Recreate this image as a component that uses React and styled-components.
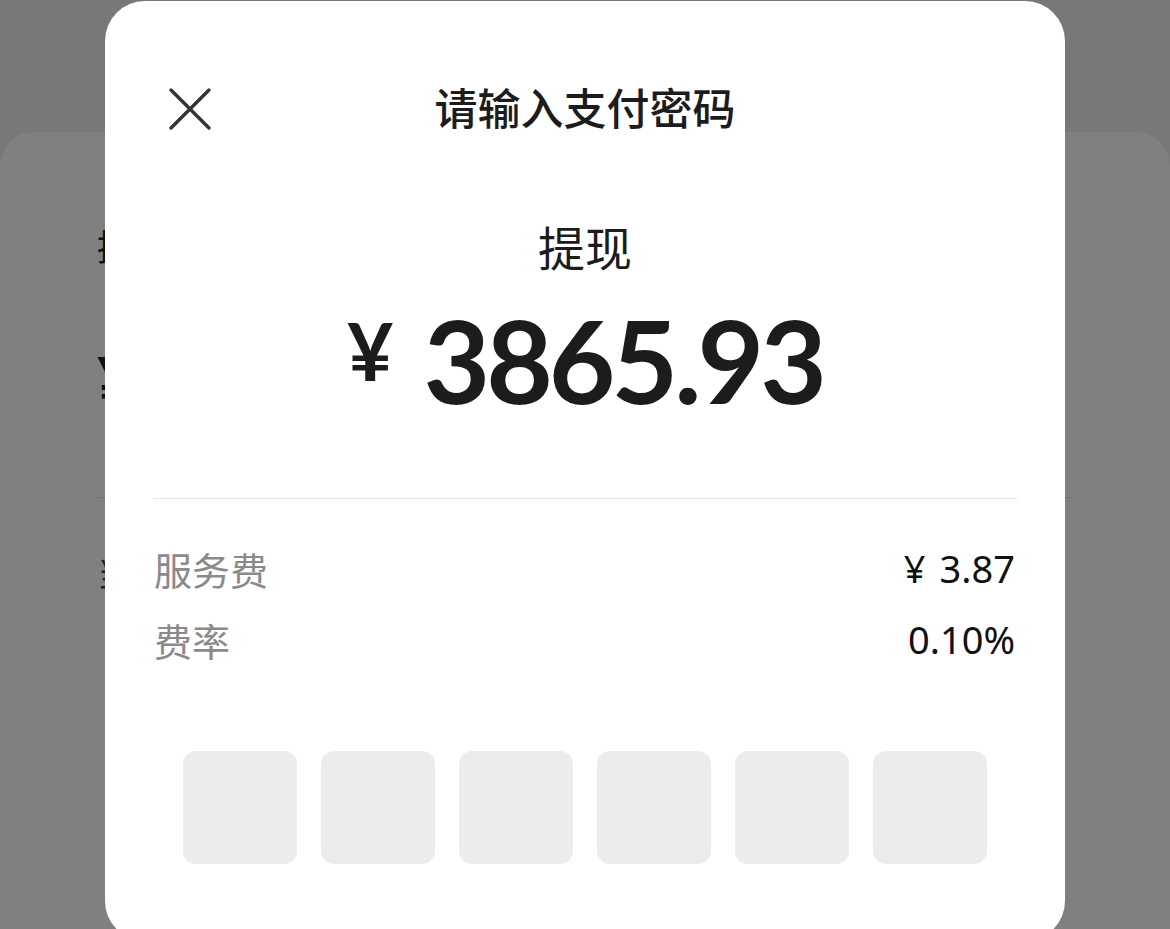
import React from 'react'
import styled, { createGlobalStyle } from 'styled-components'

const GlobalStyle = createGlobalStyle`
  html, body {
    margin: 0;
    padding: 0;
    background: #787878;
    overflow: hidden;
    height: 929px;
  }
  * {
    box-sizing: border-box;
  }
`

const cjk = `'Noto Sans', 'Noto Sans CJK SC', sans-serif`

const Page = styled.div`
  position: relative;
  width: 1170px;
  height: 929px;
  padding-top: 132px;
  font-family: ${cjk};
`

// the withdraw form underneath, dimmed by the overlay
const BackCard = styled.div`
  height: 797px;
  background: #808080;
  border-radius: 34px 34px 0 0;
  padding: 96px 96px 0 97px;
`

const BackLabel = styled.div`
  font-size: 36px;
  line-height: 40px;
  color: #111;
`

const BackAmount = styled.div`
  margin-top: 78px;
  font-family: Lato, sans-serif;
  font-weight: 700;
  font-size: 70px;
  line-height: 70px;
  color: #111;
`

const BackDivider = styled.div`
  margin-top: 81px;
  height: 1px;
  background: #747474;
`

const BackHint = styled.div`
  margin-top: 50px;
  font-size: 34px;
  color: #222;
`

const Modal = styled.div`
  position: absolute;
  top: 1px;
  left: 105px;
  width: 960px;
  height: 940px;
  background: #fff;
  border-radius: 40px;
  padding: 0 48px;
  display: flex;
  flex-direction: column;
`

const Header = styled.div`
  position: relative;
  margin-top: 75px;
  height: 66px;
  line-height: 66px;
  text-align: center;
  font-size: 43px;
  font-weight: 500;
  color: #1c1c1c;
`

const CloseButton = styled.button`
  position: absolute;
  left: 15px;
  top: 11px;
  width: 44px;
  height: 44px;
  padding: 0;
  border: none;
  background: none;
  display: flex;
  align-items: center;
  justify-content: center;
`

const Subtitle = styled.div`
  margin-top: 78px;
  text-align: center;
  font-size: 47px;
  line-height: 56px;
  color: #1c1c1c;
`

const AmountRow = styled.div`
  margin-top: 21px;
  display: flex;
  justify-content: center;
  align-items: flex-start;
  font-family: Lato, sans-serif;
  font-weight: 700;
  color: #1c1c1c;
`

const Currency = styled.span`
  font-size: 80px;
  line-height: 80px;
  margin-top: 13px;
  margin-right: 30px;
`

const Digits = styled.span`
  font-size: 115px;
  line-height: 125px;
  letter-spacing: -4px;
`

const Divider = styled.div`
  margin-top: 76px;
  height: 1px;
  background: #e4e4e4;
`

const InfoList = styled.div`
  margin-top: 46px;
  display: flex;
  flex-direction: column;
  gap: 25px;
`

const InfoRow = styled.div`
  display: flex;
  justify-content: space-between;
  align-items: center;
  height: 46px;
  font-size: 38px;
`

const InfoLabel = styled.span`
  color: #8a8a8a;
  padding-left: 1px;
`

const InfoValue = styled.span`
  color: #111;
  padding-right: 2px;
`

const Yen = styled.span`
  margin-right: 14px;
`

const PinRow = styled.div`
  margin-top: 89px;
  display: flex;
  justify-content: center;
  gap: 24px;
`

const PinBox = styled.div`
  width: 114px;
  height: 113px;
  border-radius: 13px;
  background: #ececec;
`

const CloseIcon = () => (
  <svg width='44' height='44' viewBox='0 0 44 44'>
    <path
      d='M3 3 L41 41 M41 3 L3 41'
      stroke='#333'
      strokeWidth='3.4'
      strokeLinecap='round'
    />
  </svg>
)

export default function App() {
  return (
    <>
      <GlobalStyle />
      <Page>
        <BackCard>
          <BackLabel>提现金额</BackLabel>
          <BackAmount>¥</BackAmount>
          <BackDivider />
          <BackHint>当前</BackHint>
        </BackCard>

        <Modal>
          <Header>
            <CloseButton>
              <CloseIcon />
            </CloseButton>
            请输入支付密码
          </Header>
          <Subtitle>提现</Subtitle>
          <AmountRow>
            <Currency>¥</Currency>
            <Digits>3865.93</Digits>
          </AmountRow>
          <Divider />
          <InfoList>
            <InfoRow>
              <InfoLabel>服务费</InfoLabel>
              <InfoValue>
                <Yen>¥</Yen>3.87
              </InfoValue>
            </InfoRow>
            <InfoRow>
              <InfoLabel>费率</InfoLabel>
              <InfoValue>0.10%</InfoValue>
            </InfoRow>
          </InfoList>
          <PinRow>
            {[0, 1, 2, 3, 4, 5].map(i => (
              <PinBox key={i} />
            ))}
          </PinRow>
        </Modal>
      </Page>
    </>
  )
}
